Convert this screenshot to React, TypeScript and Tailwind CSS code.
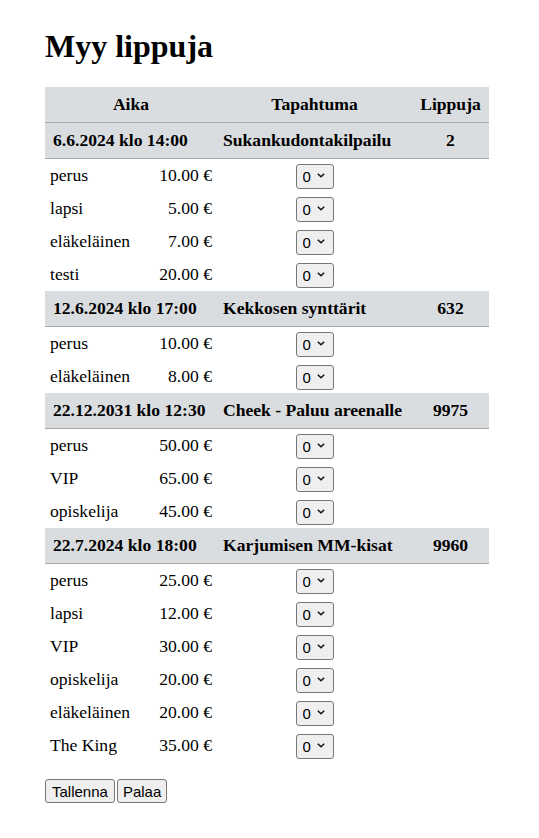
import { useState } from "react";

type Ticket = { name: string; price: string };
type Event = { date: string; title: string; left: number; tickets: Ticket[] };

const events: Event[] = [
  {
    date: "6.6.2024 klo 14:00",
    title: "Sukankudontakilpailu",
    left: 2,
    tickets: [
      { name: "perus", price: "10.00 €" },
      { name: "lapsi", price: "5.00 €" },
      { name: "eläkeläinen", price: "7.00 €" },
      { name: "testi", price: "20.00 €" },
    ],
  },
  {
    date: "12.6.2024 klo 17:00",
    title: "Kekkosen synttärit",
    left: 632,
    tickets: [
      { name: "perus", price: "10.00 €" },
      { name: "eläkeläinen", price: "8.00 €" },
    ],
  },
  {
    date: "22.12.2031 klo 12:30",
    title: "Cheek - Paluu areenalle",
    left: 9975,
    tickets: [
      { name: "perus", price: "50.00 €" },
      { name: "VIP", price: "65.00 €" },
      { name: "opiskelija", price: "45.00 €" },
    ],
  },
  {
    date: "22.7.2024 klo 18:00",
    title: "Karjumisen MM-kisat",
    left: 9960,
    tickets: [
      { name: "perus", price: "25.00 €" },
      { name: "lapsi", price: "12.00 €" },
      { name: "VIP", price: "30.00 €" },
      { name: "opiskelija", price: "20.00 €" },
      { name: "eläkeläinen", price: "20.00 €" },
      { name: "The King", price: "35.00 €" },
    ],
  },
];

const Amount = () => {
  const [value, setValue] = useState("0");
  return (
    <div className="relative w-[38px] h-[25px]">
      <select
        value={value}
        onChange={(e) => setValue(e.target.value)}
        className="appearance-none w-full h-full pl-[6px] border border-[#767676] rounded-[3px] bg-[#efefef] text-[15px] text-black font-['Liberation_Sans',Arial,sans-serif] leading-none"
      >
        {[0, 1, 2, 3, 4, 5].map((n) => (
          <option key={n} value={n}>
            {n}
          </option>
        ))}
      </select>
      <svg
        className="absolute right-[9px] top-[10px] pointer-events-none"
        width="8"
        height="5"
        viewBox="0 0 8 5"
        fill="none"
      >
        <path d="M0.8 0.8 L4 3.8 L7.2 0.8" stroke="#111" strokeWidth="1.5" />
      </svg>
    </div>
  );
};

const App = () => {
  return (
    <div className="min-h-screen bg-white text-black font-['Liberation_Serif','Times_New_Roman',serif] text-[17.6px] pl-[45px] pt-[28px]">
      <h1 className="text-[32px] font-bold leading-[37px] mb-[22px]">Myy lippuja</h1>

      <div className="w-[444px] grid grid-cols-[101px_71px_195px_77px]">
        {/* otsikkorivi */}
        <div className="col-span-2 h-[36px] flex items-center justify-center font-bold bg-[#dadddf] border-b border-[#a9a9a9]">
          Aika
        </div>
        <div className="h-[36px] flex items-center justify-center font-bold bg-[#dadddf] border-b border-[#a9a9a9]">
          Tapahtuma
        </div>
        <div className="h-[36px] flex items-center justify-center font-bold bg-[#dadddf] border-b border-[#a9a9a9]">
          Lippuja
        </div>

        {events.map((event, i) => (
          <div key={i} className="contents">
            <div className="col-span-2 h-[36px] flex items-center pl-[8px] font-bold bg-[#dadddf] border-b border-[#a9a9a9] whitespace-nowrap">
              {event.date}
            </div>
            <div className="h-[36px] flex items-center pl-[6px] font-bold bg-[#dadddf] border-b border-[#a9a9a9] whitespace-nowrap">
              {event.title}
            </div>
            <div className="h-[36px] flex items-center justify-center font-bold bg-[#dadddf] border-b border-[#a9a9a9]">
              {event.left}
            </div>

            {event.tickets.map((t, j) => (
              <div key={j} className="contents">
                <div className="h-[33px] flex items-center pl-[5px] whitespace-nowrap">{t.name}</div>
                <div className="h-[33px] flex items-center justify-end pr-[5px] whitespace-nowrap">{t.price}</div>
                <div className="h-[33px] flex items-center justify-center">
                  <Amount />
                </div>
                <div className="h-[33px]" />
              </div>
            ))}
          </div>
        ))}
      </div>

      <div className="flex gap-[2px] mt-[17px] font-['Liberation_Sans',Arial,sans-serif] text-[15px]">
        <button className="h-[24px] px-[6px] border border-[#767676] rounded-[3px] bg-[#efefef] leading-none">
          Tallenna
        </button>
        <button className="h-[24px] px-[5px] border border-[#767676] rounded-[3px] bg-[#efefef] leading-none">
          Palaa
        </button>
      </div>
    </div>
  );
};

export default App;
